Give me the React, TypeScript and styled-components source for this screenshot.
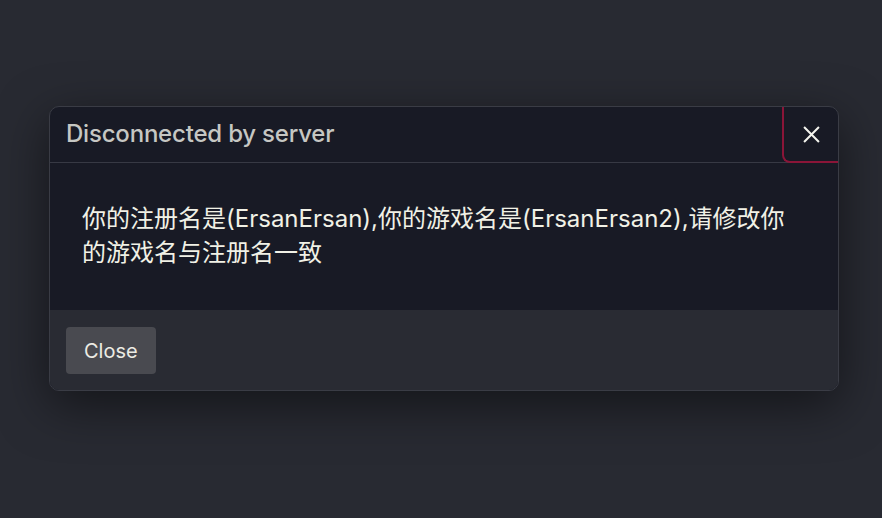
import React from 'react';
import styled, { createGlobalStyle } from 'styled-components';

const GlobalStyle = createGlobalStyle`
    html, body {
        margin: 0;
        padding: 0;
        height: 100%;
        background: #282a32;
    }
    #root {
        height: 100%;
    }
`;

const message =
    '你的注册名是(ErsanErsan),你的游戏名是(ErsanErsan2),请修改你的游戏名与注册名一致';

const CloseIcon: React.FC = () => (
    <svg width="17" height="17" viewBox="0 0 16 16" fill="none">
        <path d="M1 1L15 15M15 1L1 15" stroke="#f4f4ee" strokeWidth="1.9" />
    </svg>
);

export default function App() {
    return (
        <>
            <GlobalStyle />
            <Backdrop>
                <Dialog>
                    <Header>
                        <Title>Disconnected by server</Title>
                        <DismissButton aria-label="close">
                            <CloseIcon />
                        </DismissButton>
                    </Header>
                    <Body>
                        <Message>{message}</Message>
                    </Body>
                    <Footer>
                        <FooterButton>Close</FooterButton>
                    </Footer>
                </Dialog>
            </Backdrop>
        </>
    );
}

const Backdrop = styled.div`
    height: 100%;
    box-sizing: border-box;
    padding: 106px 0 0 49px;
    background: #282a32;
    font-family: Inter, 'Noto Sans CJK SC', sans-serif;
`;

const Dialog = styled.div`
    width: 790px;
    box-sizing: border-box;
    border: 1px solid #3a3c45;
    border-radius: 10px;
    overflow: hidden;
    background: #181a25;
    box-shadow: 0 14px 50px rgba(0, 0, 0, 0.5);
`;

const Header = styled.div`
    display: flex;
    align-items: stretch;
    height: 55px;
    border-bottom: 1px solid #373944;
`;

const Title = styled.h2`
    flex: 1;
    margin: 0;
    padding: 0 16px 3px;
    display: flex;
    align-items: center;
    font-size: 24px;
    font-weight: 500;
    letter-spacing: -0.2px;
    color: #c6c7c3;
`;

const DismissButton = styled.button`
    width: 56px;
    margin-bottom: -1px;
    padding: 0;
    display: flex;
    align-items: center;
    justify-content: center;
    background: transparent;
    border: none;
    border-left: 2px solid #8a1538;
    border-bottom: 2px solid #8a1538;
    border-bottom-left-radius: 8px;
    cursor: pointer;
`;

const Body = styled.div`
    padding: 39px 32px 40px 32px;
`;

const Message = styled.p`
    margin: 0;
    font-size: 24px;
    line-height: 34px;
    color: #f1f1e6;
    word-break: break-all;
`;

const Footer = styled.div`
    display: flex;
    height: 80px;
    box-sizing: border-box;
    padding: 17px 16px 16px;
    background: #292b33;
`;

const FooterButton = styled.button`
    height: 47px;
    padding: 0 18px;
    border: none;
    border-radius: 4px;
    background: #494a50;
    color: #ecece4;
    font-family: Inter, sans-serif;
    font-size: 20px;
    cursor: pointer;
`;
